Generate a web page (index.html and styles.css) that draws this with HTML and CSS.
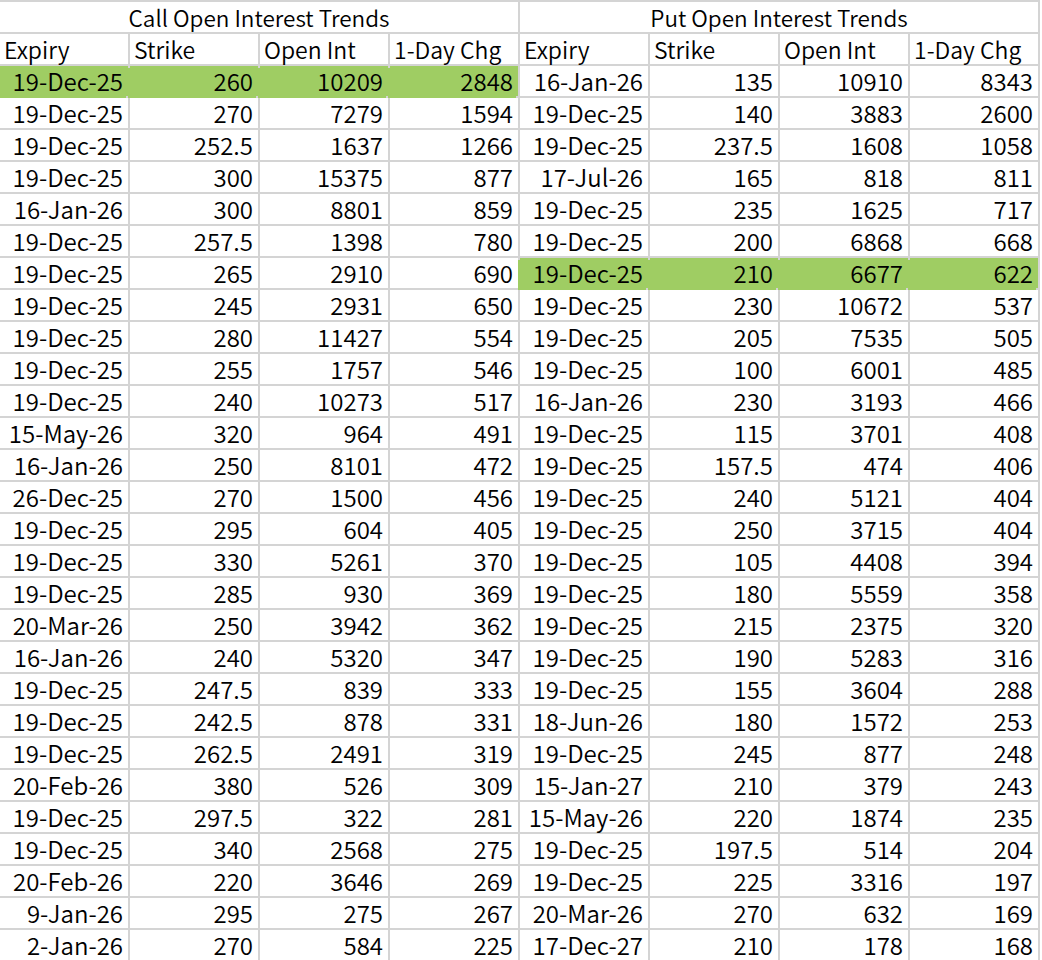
FILE: index.html
```html
<!DOCTYPE html>
<html lang="en">
<head>
<meta charset="utf-8">
<title>Open Interest Trends</title>
<link rel="stylesheet" href="styles.css">
</head>
<body>
<div class="sheet">
  <div class="cell title">Call Open Interest Trends</div>
  <div class="cell title">Put Open Interest Trends</div>

  <div class="cell head">Expiry</div><div class="cell head">Strike</div><div class="cell head">Open Int</div><div class="cell head">1-Day Chg</div>
  <div class="cell head">Expiry</div><div class="cell head">Strike</div><div class="cell head">Open Int</div><div class="cell head">1-Day Chg</div>

  <div class="cell hl">19-Dec-25</div><div class="cell hl">260</div><div class="cell hl">10209</div><div class="cell hl">2848</div>
  <div class="cell">16-Jan-26</div><div class="cell">135</div><div class="cell">10910</div><div class="cell">8343</div>

  <div class="cell">19-Dec-25</div><div class="cell">270</div><div class="cell">7279</div><div class="cell">1594</div>
  <div class="cell">19-Dec-25</div><div class="cell">140</div><div class="cell">3883</div><div class="cell">2600</div>

  <div class="cell">19-Dec-25</div><div class="cell">252.5</div><div class="cell">1637</div><div class="cell">1266</div>
  <div class="cell">19-Dec-25</div><div class="cell">237.5</div><div class="cell">1608</div><div class="cell">1058</div>

  <div class="cell">19-Dec-25</div><div class="cell">300</div><div class="cell">15375</div><div class="cell">877</div>
  <div class="cell">17-Jul-26</div><div class="cell">165</div><div class="cell">818</div><div class="cell">811</div>

  <div class="cell">16-Jan-26</div><div class="cell">300</div><div class="cell">8801</div><div class="cell">859</div>
  <div class="cell">19-Dec-25</div><div class="cell">235</div><div class="cell">1625</div><div class="cell">717</div>

  <div class="cell">19-Dec-25</div><div class="cell">257.5</div><div class="cell">1398</div><div class="cell">780</div>
  <div class="cell">19-Dec-25</div><div class="cell">200</div><div class="cell">6868</div><div class="cell">668</div>

  <div class="cell">19-Dec-25</div><div class="cell">265</div><div class="cell">2910</div><div class="cell">690</div>
  <div class="cell hl">19-Dec-25</div><div class="cell hl">210</div><div class="cell hl">6677</div><div class="cell hl">622</div>

  <div class="cell">19-Dec-25</div><div class="cell">245</div><div class="cell">2931</div><div class="cell">650</div>
  <div class="cell">19-Dec-25</div><div class="cell">230</div><div class="cell">10672</div><div class="cell">537</div>

  <div class="cell">19-Dec-25</div><div class="cell">280</div><div class="cell">11427</div><div class="cell">554</div>
  <div class="cell">19-Dec-25</div><div class="cell">205</div><div class="cell">7535</div><div class="cell">505</div>

  <div class="cell">19-Dec-25</div><div class="cell">255</div><div class="cell">1757</div><div class="cell">546</div>
  <div class="cell">19-Dec-25</div><div class="cell">100</div><div class="cell">6001</div><div class="cell">485</div>

  <div class="cell">19-Dec-25</div><div class="cell">240</div><div class="cell">10273</div><div class="cell">517</div>
  <div class="cell">16-Jan-26</div><div class="cell">230</div><div class="cell">3193</div><div class="cell">466</div>

  <div class="cell">15-May-26</div><div class="cell">320</div><div class="cell">964</div><div class="cell">491</div>
  <div class="cell">19-Dec-25</div><div class="cell">115</div><div class="cell">3701</div><div class="cell">408</div>

  <div class="cell">16-Jan-26</div><div class="cell">250</div><div class="cell">8101</div><div class="cell">472</div>
  <div class="cell">19-Dec-25</div><div class="cell">157.5</div><div class="cell">474</div><div class="cell">406</div>

  <div class="cell">26-Dec-25</div><div class="cell">270</div><div class="cell">1500</div><div class="cell">456</div>
  <div class="cell">19-Dec-25</div><div class="cell">240</div><div class="cell">5121</div><div class="cell">404</div>

  <div class="cell">19-Dec-25</div><div class="cell">295</div><div class="cell">604</div><div class="cell">405</div>
  <div class="cell">19-Dec-25</div><div class="cell">250</div><div class="cell">3715</div><div class="cell">404</div>

  <div class="cell">19-Dec-25</div><div class="cell">330</div><div class="cell">5261</div><div class="cell">370</div>
  <div class="cell">19-Dec-25</div><div class="cell">105</div><div class="cell">4408</div><div class="cell">394</div>

  <div class="cell">19-Dec-25</div><div class="cell">285</div><div class="cell">930</div><div class="cell">369</div>
  <div class="cell">19-Dec-25</div><div class="cell">180</div><div class="cell">5559</div><div class="cell">358</div>

  <div class="cell">20-Mar-26</div><div class="cell">250</div><div class="cell">3942</div><div class="cell">362</div>
  <div class="cell">19-Dec-25</div><div class="cell">215</div><div class="cell">2375</div><div class="cell">320</div>

  <div class="cell">16-Jan-26</div><div class="cell">240</div><div class="cell">5320</div><div class="cell">347</div>
  <div class="cell">19-Dec-25</div><div class="cell">190</div><div class="cell">5283</div><div class="cell">316</div>

  <div class="cell">19-Dec-25</div><div class="cell">247.5</div><div class="cell">839</div><div class="cell">333</div>
  <div class="cell">19-Dec-25</div><div class="cell">155</div><div class="cell">3604</div><div class="cell">288</div>

  <div class="cell">19-Dec-25</div><div class="cell">242.5</div><div class="cell">878</div><div class="cell">331</div>
  <div class="cell">18-Jun-26</div><div class="cell">180</div><div class="cell">1572</div><div class="cell">253</div>

  <div class="cell">19-Dec-25</div><div class="cell">262.5</div><div class="cell">2491</div><div class="cell">319</div>
  <div class="cell">19-Dec-25</div><div class="cell">245</div><div class="cell">877</div><div class="cell">248</div>

  <div class="cell">20-Feb-26</div><div class="cell">380</div><div class="cell">526</div><div class="cell">309</div>
  <div class="cell">15-Jan-27</div><div class="cell">210</div><div class="cell">379</div><div class="cell">243</div>

  <div class="cell">19-Dec-25</div><div class="cell">297.5</div><div class="cell">322</div><div class="cell">281</div>
  <div class="cell">15-May-26</div><div class="cell">220</div><div class="cell">1874</div><div class="cell">235</div>

  <div class="cell">19-Dec-25</div><div class="cell">340</div><div class="cell">2568</div><div class="cell">275</div>
  <div class="cell">19-Dec-25</div><div class="cell">197.5</div><div class="cell">514</div><div class="cell">204</div>

  <div class="cell">20-Feb-26</div><div class="cell">220</div><div class="cell">3646</div><div class="cell">269</div>
  <div class="cell">19-Dec-25</div><div class="cell">225</div><div class="cell">3316</div><div class="cell">197</div>

  <div class="cell">9-Jan-26</div><div class="cell">295</div><div class="cell">275</div><div class="cell">267</div>
  <div class="cell">20-Mar-26</div><div class="cell">270</div><div class="cell">632</div><div class="cell">169</div>

  <div class="cell">2-Jan-26</div><div class="cell">270</div><div class="cell">584</div><div class="cell">225</div>
  <div class="cell">17-Dec-27</div><div class="cell">210</div><div class="cell">178</div><div class="cell">168</div>
</div>
</body>
</html>
```

FILE: styles.css
```css
html, body {
  margin: 0;
  padding: 0;
  background: #ffffff;
}

body {
  font-family: "Noto Sans CJK SC", "Liberation Sans", sans-serif;
  font-weight: 350;
  color: #000000;
  overflow: hidden;
}

.sheet {
  display: grid;
  grid-template-columns: repeat(8, 128px);
  grid-auto-rows: 30px;
  gap: 2px;
  padding: 2px 2px 0 0;
  width: max-content;
  background: #d4d4d4;
}

.cell {
  background: #ffffff;
  font-size: 24px;
  line-height: 30px;
  text-align: right;
  padding: 0 5px;
  white-space: nowrap;
}

.title {
  grid-column: span 4;
  text-align: center;
  font-size: 22.5px;
}

.head {
  text-align: left;
  font-size: 23px;
  padding-left: 4px;
}

.hl {
  background: #9fcd63;
  box-shadow: -2px 2px 0 #9fcd63;
}
```
